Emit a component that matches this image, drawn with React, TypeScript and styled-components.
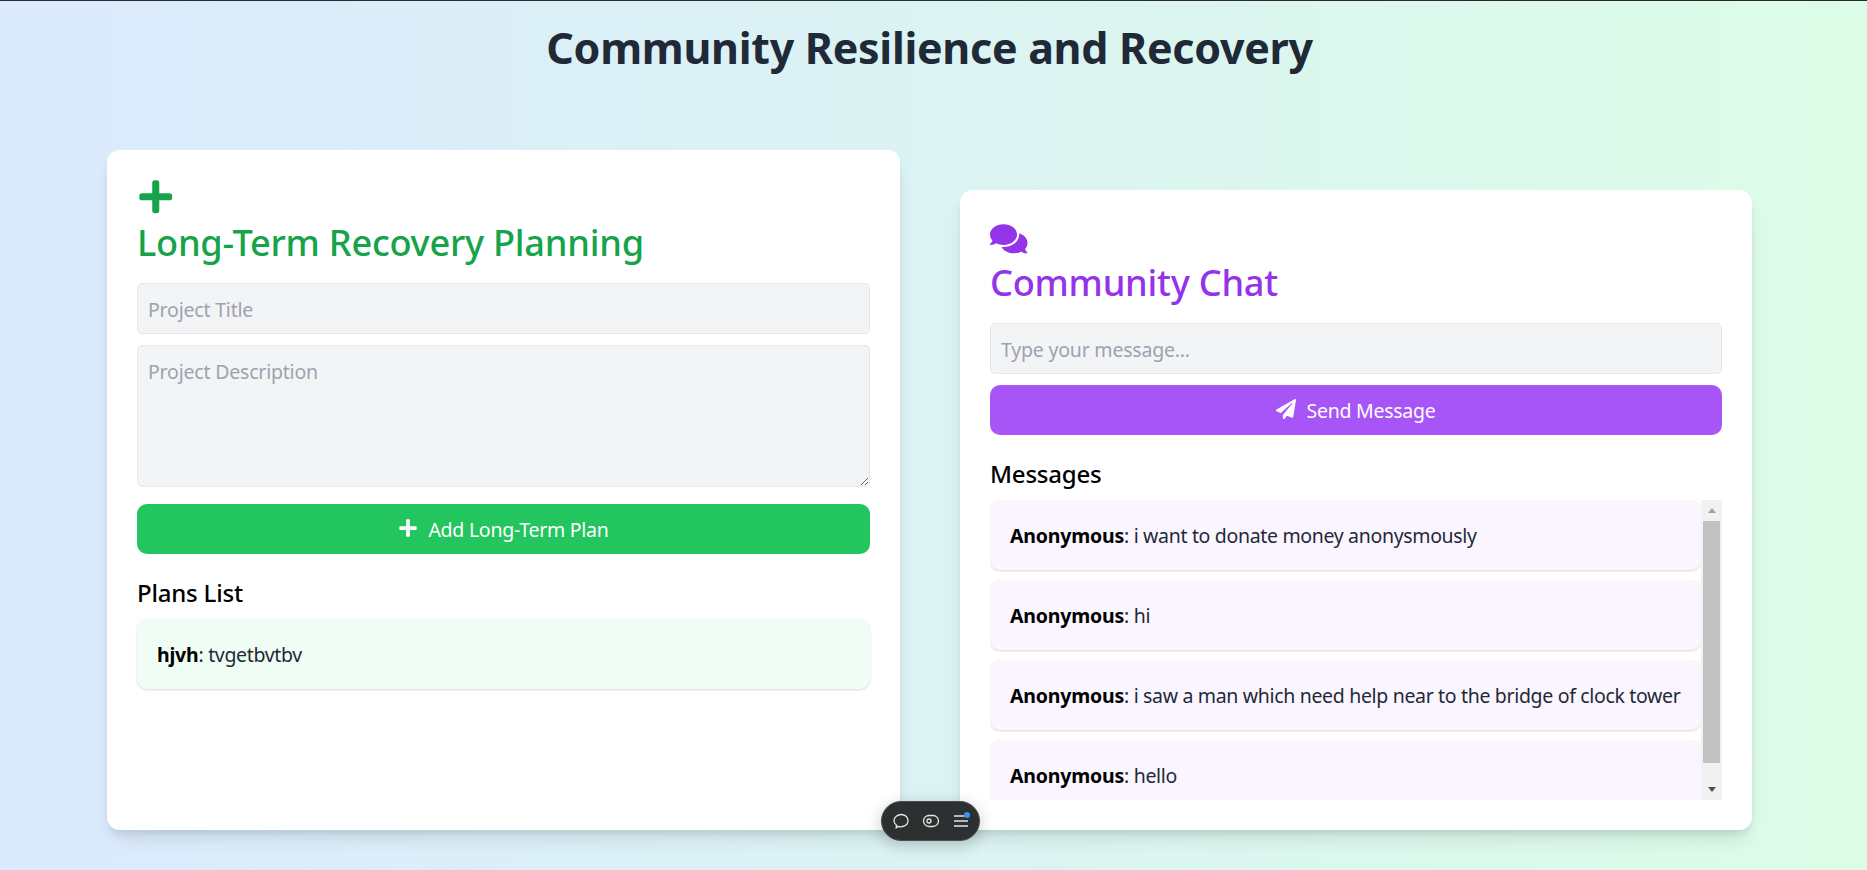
import React from 'react';
import styled, { createGlobalStyle } from 'styled-components';
import { FaPlus, FaComments, FaPaperPlane } from 'react-icons/fa';

const FONT = '"Noto Sans", "Open Sans", sans-serif';

const MESSAGES = [
	'i want to donate money anonysmously',
	'hi',
	'i saw a man which need help near to the bridge of clock tower',
	'hello',
];

const GlobalStyle = createGlobalStyle`
	html, body {
		margin: 0;
		height: 100%;
		overflow: hidden;
	}
	* {
		box-sizing: border-box;
	}
	body {
		font-family: ${FONT};
	}
`;

const App = () => (
	<Page>
		<GlobalStyle />
		<Title>Community Resilience and Recovery</Title>
		<Columns>
			<Card $height={680}>
				<CardIcon $color="#16a34a" $shift={-2}>
					<FaPlus size={37.5} />
				</CardIcon>
				<CardTitle $color="#16a34a">Long-Term Recovery Planning</CardTitle>
				<TextInput placeholder="Project Title" />
				<TextArea placeholder="Project Description" />
				<ActionButton $color="#22c55e" $top={17}>
					<FaPlus size={20} />
					Add Long-Term Plan
				</ActionButton>
				<SectionTitle>Plans List</SectionTitle>
				<ListItem $color="#f0fdf4">
					<b>hjvh</b>: tvgetbvtbv
				</ListItem>
			</Card>
			<Card $height={640}>
				<CardIcon $color="#9333ea" $shift={0}>
					<FaComments size={37.5} />
				</CardIcon>
				<CardTitle $color="#9333ea">Community Chat</CardTitle>
				<TextInput placeholder="Type your message..." />
				<ActionButton $color="#a855f7" $top={11}>
					<FaPaperPlane size={20} />
					Send Message
				</ActionButton>
				<SectionTitle>Messages</SectionTitle>
				<MessagePane>
					<MessageList>
						{MESSAGES.map(message => (
							<ListItem key={message} $color="#faf5ff">
								<b>Anonymous</b>: {message}
							</ListItem>
						))}
					</MessageList>
					<ScrollTrack>
						<ScrollButton>
							<ArrowUp />
						</ScrollButton>
						<ScrollThumb />
						<ScrollButton>
							<ArrowDown />
						</ScrollButton>
					</ScrollTrack>
				</MessagePane>
			</Card>
		</Columns>
		<ToolBubble>
			<svg width="18" height="18" viewBox="0 0 18 18" fill="none" stroke="#e4e6e6" strokeWidth="1.3">
				<path d="M4.200 16c.9-.4 1.400-1 1.600-1.700 4.300 1.500 10.200-.6 10.200-5.600C16 5 13 2.500 9.300 2.500S2 5.200 2 8.700c0 1.900.9 3.300 2.300 4.300.2 1-.1 2.100-.1 3z" />
			</svg>
			<svg width="18" height="18" viewBox="0 0 18 18" fill="none" stroke="#e4e6e6" strokeWidth="1.3">
				<rect x="1.500" y="3.500" width="15" height="11" rx="5.500" />
				<circle cx="7" cy="9" r="2" />
			</svg>
			<MenuIcon>
				<svg width="18" height="18" viewBox="0 0 18 18" fill="none" stroke="#e4e6e6" strokeWidth="1.400">
					<path d="M2 4h10.500M2 9h14M2 14h14" />
				</svg>
				<MenuDot />
			</MenuIcon>
		</ToolBubble>
	</Page>
);

const Page = styled.div`
	position: relative;
	height: 870px;
	border-top: 1px solid #2b2b2d;
	background: linear-gradient(to right, #dbeafe, #dcfce7);
	color: #000;
	overflow: hidden;
`;

const Title = styled.h1`
	margin: 0;
	padding: 17px 8px 0 0;
	height: 149px;
	font-size: 43px;
	letter-spacing: -0.3px;
	line-height: 60px;
	font-weight: 700;
	text-align: center;
	color: #1f2937;
`;

const Columns = styled.div`
	display: grid;
	grid-template-columns: 793px 792px;
	justify-content: start;
	column-gap: 60px;
	align-items: end;
	padding-left: 107px;
`;

const Card = styled.section<{ $height: number }>`
	height: ${props => props.$height}px;
	padding: 30px;
	background: #fff;
	border-radius: 12.5px;
	box-shadow: 0 12px 18px -4px rgba(0, 0, 0, 0.1), 0 5px 8px -3px rgba(0, 0, 0, 0.1);
`;

const CardIcon = styled.div<{ $color: string; $shift: number }>`
	height: 37.5px;
	color: ${props => props.$color};
	svg {
		display: block;
		transform: translateY(${props => props.$shift}px);
	}
`;

const CardTitle = styled.h2<{ $color: string }>`
	margin: -1px 0 16px;
	font-size: 36.2px;
	letter-spacing: -0.25px;
	line-height: 50px;
	font-weight: 500;
	color: ${props => props.$color};
`;

const fieldStyles = `
	display: block;
	width: 100%;
	padding: 11px 10px 9px;
	border: 1px solid #e5e7eb;
	border-radius: 5px;
	background: #f3f4f6;
	font-family: ${FONT};
	font-size: 19.5px;
	letter-spacing: -0.2px;
	line-height: 30px;
	outline: none;
	&::placeholder {
		color: #9ca3af;
	}
`;

const TextInput = styled.input`
	${fieldStyles}
	height: 51px;
`;

const TextArea = styled.textarea`
	${fieldStyles}
	height: 142px;
	margin-top: 11px;
`;

const ActionButton = styled.button<{ $color: string; $top: number }>`
	display: flex;
	align-items: center;
	justify-content: center;
	gap: 10px;
	width: 100%;
	height: 50px;
	margin-top: ${props => props.$top}px;
	padding-top: 2px;
	border: 0;
	border-radius: 10px;
	background: ${props => props.$color};
	color: #fff;
	font-family: ${FONT};
	font-size: 19.5px;
	letter-spacing: -0.25px;
	font-weight: 400;
	svg {
		transform: translateY(-1px);
	}
`;

const SectionTitle = styled.h3`
	margin: 22px 0 10px;
	font-size: 24px;
	letter-spacing: -0.2px;
	line-height: 33px;
	font-weight: 500;
`;

const ListItem = styled.div<{ $color: string }>`
	display: flex;
	flex-shrink: 0;
	align-items: center;
	white-space: pre;
	height: 70px;
	padding: 2px 20px 0;
	border-radius: 10px;
	background: ${props => props.$color};
	color: #1f2937;
	font-size: 19.5px;
	letter-spacing: -0.33px;
	box-shadow: 0 1px 3px rgba(0, 0, 0, 0.1), 0 1px 2px rgba(0, 0, 0, 0.06);
	b {
		color: #000;
		font-weight: 700;
		letter-spacing: -0.2px;
	}
`;

const MessagePane = styled.div`
	display: flex;
	height: 300px;
`;

const MessageList = styled.div`
	display: flex;
	flex: 1;
	flex-direction: column;
	gap: 10px;
	min-width: 0;
	overflow: hidden;
`;

const ScrollTrack = styled.div`
	display: flex;
	flex: 0 0 21px;
	flex-direction: column;
	justify-content: flex-start;
	background: #f1f1f1;
`;

const ScrollButton = styled.div`
	display: flex;
	flex: 0 0 21px;
	align-items: center;
	justify-content: center;
	&:last-child {
		margin-top: auto;
	}
`;

const ArrowUp = styled.span`
	width: 0;
	height: 0;
	border-left: 4.5px solid transparent;
	border-right: 4.5px solid transparent;
	border-bottom: 5px solid #a3a3a3;
`;

const ArrowDown = styled.span`
	width: 0;
	height: 0;
	border-left: 4.5px solid transparent;
	border-right: 4.5px solid transparent;
	border-top: 5px solid #505050;
`;

const ScrollThumb = styled.div`
	flex: 0 0 242px;
	margin: 0 2px;
	background: #c1c1c1;
`;

const ToolBubble = styled.div`
	position: absolute;
	left: 881px;
	top: 800px;
	display: flex;
	align-items: center;
	justify-content: center;
	gap: 12px;
	width: 99px;
	height: 40px;
	border-radius: 20px;
	border: 1px solid #4a4c4d;
	background: #2d3031;
	box-shadow: 0 4px 16px rgba(0, 0, 0, 0.22);
`;

const MenuIcon = styled.div`
	position: relative;
	width: 18px;
	height: 18px;
`;

const MenuDot = styled.span`
	position: absolute;
	top: 0;
	right: 0;
	width: 6px;
	height: 6px;
	border-radius: 50%;
	background: #3b8ff3;
`;

export default App;
